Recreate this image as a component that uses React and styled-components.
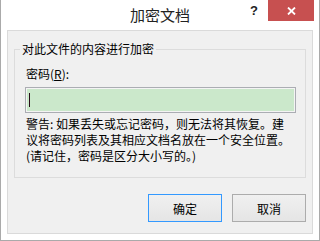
import React from "react";
import styled, { createGlobalStyle } from "styled-components";

const GlobalStyle = createGlobalStyle`
  html, body {
    margin: 0;
    padding: 0;
    background: #ffffff;
  }
  * {
    box-sizing: border-box;
  }
`;

const cjk = `"Noto Sans CJK SC", "Liberation Sans", sans-serif`;

const Window = styled.div`
  width: 320px;
  height: 241px;
  background: #ffffff;
  border: 1px solid #aaaaaa;
  border-top: none;
  display: flex;
  flex-direction: column;
  font-family: ${cjk};
  color: #000000;
`;

const TitleBar = styled.div`
  height: 30px;
  display: grid;
  grid-template-columns: 1fr auto 1fr;
  align-items: start;
`;

const Title = styled.div`
  grid-column: 2;
  font-size: 15px;
  line-height: 30px;
  color: #222222;
  margin-top: 0px;
`;

const Controls = styled.div`
  grid-column: 3;
  justify-self: end;
  display: flex;
  align-items: flex-start;
  margin-right: 5px;
`;

const HelpButton = styled.div`
  width: 24px;
  height: 21px;
  font-family: "Liberation Sans", sans-serif;
  font-weight: bold;
  font-size: 13px;
  line-height: 21px;
  text-align: center;
  color: #222222;
  margin-right: 2px;
`;

const CloseButton = styled.div`
  width: 46px;
  height: 21px;
  background: #c75050;
  display: flex;
  align-items: center;
  justify-content: center;
`;

const Client = styled.div`
  flex: 1;
  margin: 0 6px 6px 6px;
  border: 1px solid #dadada;
  background: #f0f0f0;
  padding: 0 6px;
  display: flex;
  flex-direction: column;
`;

const Group = styled.fieldset`
  margin: 10px 0 0 0;
  border: 1px solid #dcdcdc;
  padding: 9px 9px 13px 10px;
  min-width: 0;
`;

const Legend = styled.legend`
  font-size: 12px;
  line-height: 16px;
  padding: 0 2px;
  margin-left: -5px;
`;

const FieldLabel = styled.div`
  font-size: 12px;
  line-height: 16px;
  padding-left: 1px;
`;

const Key = styled.span`
  text-decoration: underline;
`;

const PasswordBox = styled.div`
  margin-top: 5px;
  height: 26px;
  width: 100%;
  border: 1px solid #abadb3;
  background: #cbe8cb;
  box-shadow: inset 0 0 0 1px #f4f4f4;
  display: flex;
  align-items: center;
  padding-left: 3px;
`;

const Caret = styled.span`
  width: 1px;
  height: 14px;
  background: #2a0a1a;
`;

const Warning = styled.div`
  margin-top: 3px;
  font-size: 12px;
  line-height: 16px;
  padding-left: 1px;
  white-space: nowrap;
`;

const Line = styled.span`
  display: block;
`;

const ButtonRow = styled.div`
  margin-top: 16px;
  display: flex;
  justify-content: flex-end;
  gap: 10px;
`;

const Button = styled.button`
  width: 74px;
  height: 28px;
  font-family: ${cjk};
  font-size: 12px;
  color: #000000;
  background: linear-gradient(#f0f0f0, #e5e5e5);
  border: 1px solid ${(p) => (p.primary ? "#3399ff" : "#acacac")};
  border-radius: 0;
  padding: 0;
`;

export default function App() {
  return (
    <>
      <GlobalStyle />
      <Window>
        <TitleBar>
          <Title>加密文档</Title>
          <Controls>
            <HelpButton>?</HelpButton>
            <CloseButton>
              <svg width="9" height="8" viewBox="0 0 9 8">
                <path d="M1 0.5 L8 7.5 M8 0.5 L1 7.5" stroke="#ffffff" strokeWidth="1.8" />
              </svg>
            </CloseButton>
          </Controls>
        </TitleBar>
        <Client>
          <Group>
            <Legend>对此文件的内容进行加密</Legend>
            <FieldLabel>
              密码(<Key>R</Key>):
            </FieldLabel>
            <PasswordBox>
              <Caret />
            </PasswordBox>
            <Warning>
              <Line>警告: 如果丢失或忘记密码，则无法将其恢复。建</Line>
              <Line>议将密码列表及其相应文档名放在一个安全位置。</Line>
              <Line>(请记住，密码是区分大小写的。)</Line>
            </Warning>
          </Group>
          <ButtonRow>
            <Button primary>确定</Button>
            <Button>取消</Button>
          </ButtonRow>
        </Client>
      </Window>
    </>
  );
}
